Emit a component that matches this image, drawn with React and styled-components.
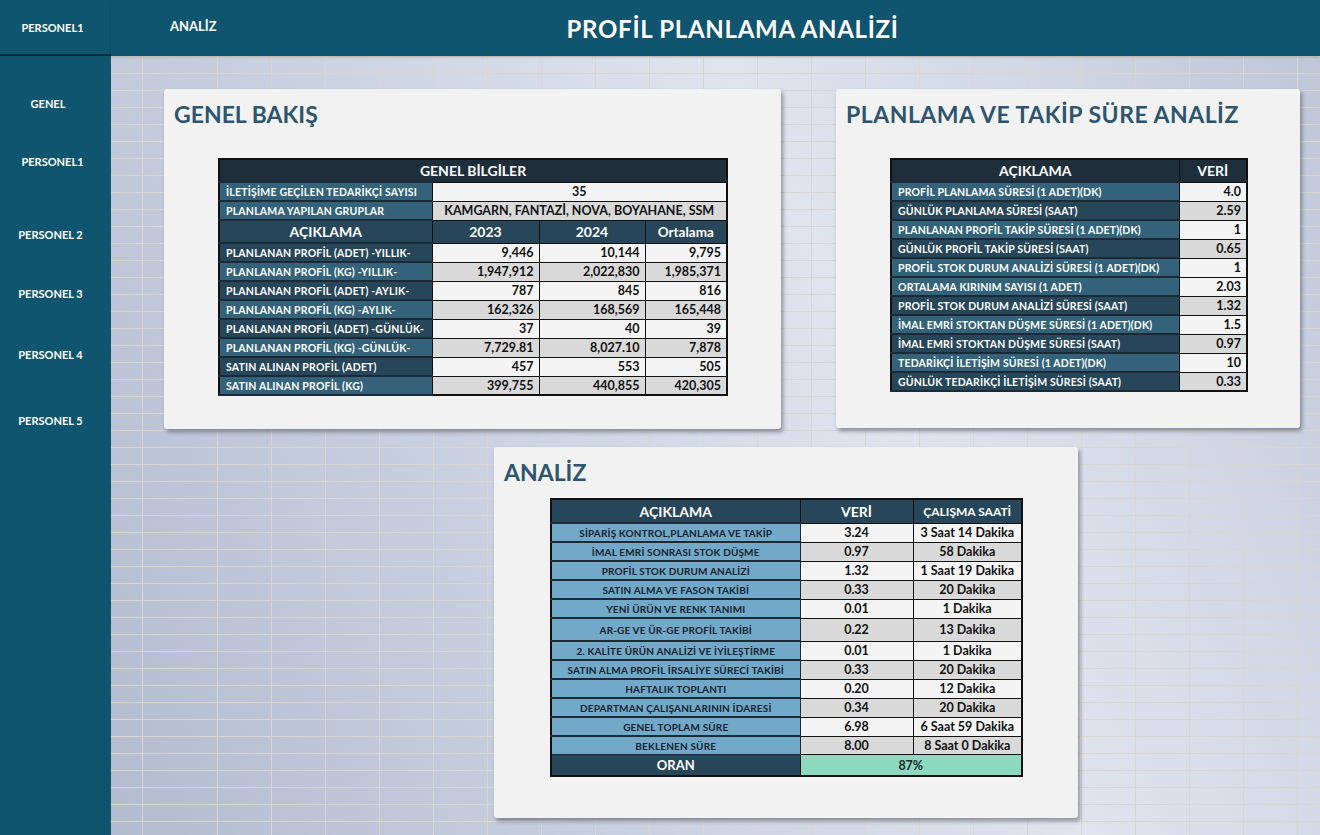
import React from 'react';
import styled, { createGlobalStyle } from 'styled-components';

const GlobalStyle = createGlobalStyle`
  html, body {
    margin: 0;
    padding: 0;
  }
  body {
    font-family: Lato, "Open Sans", "Noto Sans", sans-serif;
    background: #0f5570;
  }
`;

const Page = styled.div`
  display: grid;
  grid-template-columns: 111px 1fr;
  grid-template-rows: 56px 1fr;
  width: 1320px;
  height: 835px;
  overflow: hidden;
`;

const Brand = styled.div`
  background: #0f5570;
  border-bottom: 2px solid #0a2b3a;
  box-sizing: border-box;
  display: flex;
  align-items: center;
  justify-content: center;
  padding: 0 6px 0 0;
  color: #fff;
  font-weight: 700;
  font-size: 11px;
`;

const TopBar = styled.header`
  background: #0f5570;
  display: flex;
  align-items: center;
  padding-left: 59px;
  color: #fff;
  box-shadow: 0 1px 2px rgba(0, 0, 0, 0.2);
  z-index: 1;
`;

const TopLink = styled.span`
  font-weight: 700;
  font-size: 13px;
  margin-top: -5px;
`;

const Title = styled.h1`
  margin: 0 0 0 350px;
  font-size: 24px;
  font-weight: 700;
  letter-spacing: 0.7px;
`;

const Sidebar = styled.nav`
  background: #0f5570;
  display: flex;
  flex-direction: column;
  align-items: center;
  padding-right: 10px;
`;

const SideItem = styled.div`
  margin-top: ${p => p.$top}px;
  margin-left: ${p => p.$shift || 0}px;
  line-height: 14px;
  color: #fff;
  font-weight: 700;
  font-size: 11px;
  white-space: nowrap;
`;

const Canvas = styled.main`
  position: relative;
  padding: 33px 20px 0 53px;
  background-color: #cdd4e3;
  background-image:
    repeating-linear-gradient(to right, transparent 0 53px, #dad6cf 53px 54px),
    repeating-linear-gradient(to bottom, #dad6cf 0 1px, transparent 1px 17px),
    linear-gradient(65deg, #b3bbcf 0%, #c7cedf 30%, #dfe4ee 62%, #d2d8e6 80%, #bfc6d8 100%);
  background-position: 53px 0, 0 0, 0 0;
`;

const TopRow = styled.div`
  display: flex;
  gap: 55px;
`;

const Card = styled.section`
  width: ${p => p.$w}px;
  height: ${p => p.$h}px;
  margin-left: ${p => p.$left || 0}px;
  margin-top: ${p => p.$top || 0}px;
  background: #f2f2f2;
  border-radius: 3px;
  box-shadow: 2px 3px 4px rgba(40, 45, 60, 0.45);
  box-sizing: border-box;
  padding: 10px 0 0 10px;
`;

const CardTitle = styled.h2`
  margin: 0;
  font-size: 23px;
  font-weight: 700;
  color: #2e5570;
  line-height: 30px;
  letter-spacing: ${p => p.$spacing || 0}px;
`;

const TableWrap = styled.div`
  margin-top: ${p => p.$top}px;
  margin-left: ${p => p.$left}px;
`;

const Table = styled.table`
  border-collapse: collapse;
  table-layout: fixed;
  width: ${p => p.$w}px;
  border: 2px solid #111;
  font-weight: 700;
`;

const Head = styled.th`
  height: ${p => p.$h || 21}px;
  padding: 0 4px;
  background: ${p => p.$bg || '#27465a'};
  color: #fff;
  font-size: ${p => p.$size || 14}px;
  text-align: center;
  border: 1px solid #111;
  white-space: nowrap;
`;

const Label = styled.td`
  height: ${p => p.$h || 17}px;
  padding: 0 0 0 6px;
  background: ${p => (p.$dark ? '#27465a' : '#33627a')};
  color: #fff;
  font-size: ${p => p.$size || 10.5}px;
  letter-spacing: ${p => p.$spacing ?? 0.2}px;
  text-align: left;
  white-space: nowrap;
  overflow: hidden;
  border-top: 2px solid #1b2a34;
  border-bottom: 2px solid #1b2a34;
  border-left: 1px solid #111;
  border-right: 1px solid #111;
`;

const SoftLabel = styled.td`
  height: ${p => p.$h || 17}px;
  padding: 0 2px;
  background: #72a8c8;
  color: #15232d;
  font-size: 10px;
  letter-spacing: 0.15px;
  text-align: center;
  white-space: nowrap;
  overflow: hidden;
  border: 1px solid #1b2a34;
  border-top-width: 2px;
`;

const Value = styled.td`
  height: ${p => p.$h || 17}px;
  padding: 0 ${p => (p.$center ? 2 : 5)}px 0 2px;
  background: ${p => (p.$gray ? '#d9d9d9' : '#f4f4f4')};
  color: #111;
  font-size: 12.5px;
  text-align: ${p => (p.$center ? 'center' : 'right')};
  white-space: nowrap;
  border: 1px solid #111;
`;

const Ratio = styled.td`
  height: 18px;
  background: #8cd9c0;
  color: #1a2a30;
  font-size: 12.5px;
  text-align: center;
  border: 1px solid #111;
`;

const generalRows = [
  ['PLANLANAN PROFİL (ADET) -YILLIK-', '9,446', '10,144', '9,795'],
  ['PLANLANAN PROFİL (KG) -YILLIK-', '1,947,912', '2,022,830', '1,985,371'],
  ['PLANLANAN PROFİL (ADET) -AYLIK-', '787', '845', '816'],
  ['PLANLANAN PROFİL (KG) -AYLIK-', '162,326', '168,569', '165,448'],
  ['PLANLANAN PROFİL (ADET) -GÜNLÜK-', '37', '40', '39'],
  ['PLANLANAN PROFİL (KG) -GÜNLÜK-', '7,729.81', '8,027.10', '7,878'],
  ['SATIN ALINAN PROFİL (ADET)', '457', '553', '505'],
  ['SATIN ALINAN PROFİL (KG)', '399,755', '440,855', '420,305']
];

const timeRows = [
  ['PROFİL PLANLAMA SÜRESİ (1 ADET)(DK)', '4.0', false],
  ['GÜNLÜK PLANLAMA SÜRESİ (SAAT)', '2.59', true],
  ['PLANLANAN PROFİL TAKİP SÜRESİ (1 ADET)(DK)', '1', false],
  ['GÜNLÜK PROFİL TAKİP SÜRESİ (SAAT)', '0.65', true],
  ['PROFİL STOK DURUM ANALİZİ SÜRESİ (1 ADET)(DK)', '1', false],
  ['ORTALAMA KIRINIM SAYISI (1 ADET)', '2.03', false],
  ['PROFİL STOK DURUM ANALİZİ SÜRESİ (SAAT)', '1.32', true],
  ['İMAL EMRİ STOKTAN DÜŞME SÜRESİ (1 ADET)(DK)', '1.5', false],
  ['İMAL EMRİ STOKTAN DÜŞME SÜRESİ (SAAT)', '0.97', true],
  ['TEDARİKÇİ İLETİŞİM SÜRESİ (1 ADET)(DK)', '10', false],
  ['GÜNLÜK TEDARİKÇİ İLETİŞİM SÜRESİ (SAAT)', '0.33', true]
];

const analysisRows = [
  ['SİPARİŞ KONTROL,PLANLAMA VE TAKİP', '3.24', '3 Saat 14 Dakika'],
  ['İMAL EMRİ SONRASI STOK DÜŞME', '0.97', '58 Dakika'],
  ['PROFİL STOK DURUM ANALİZİ', '1.32', '1 Saat 19 Dakika'],
  ['SATIN ALMA VE FASON TAKİBİ', '0.33', '20 Dakika'],
  ['YENİ ÜRÜN VE RENK TANIMI', '0.01', '1 Dakika'],
  ['AR-GE VE ÜR-GE PROFİL TAKİBİ', '0.22', '13 Dakika', 21],
  ['2. KALİTE ÜRÜN ANALİZİ VE İYİLEŞTİRME', '0.01', '1 Dakika'],
  ['SATIN ALMA PROFİL İRSALİYE SÜRECİ TAKİBİ', '0.33', '20 Dakika'],
  ['HAFTALIK TOPLANTI', '0.20', '12 Dakika'],
  ['DEPARTMAN ÇALIŞANLARININ İDARESİ', '0.34', '20 Dakika'],
  ['GENEL TOPLAM SÜRE', '6.98', '6 Saat 59 Dakika'],
  ['BEKLENEN SÜRE', '8.00', '8 Saat 0 Dakika']
];

const sideItems = [
  ['GENEL', 41, -5],
  ['PERSONEL1', 44, 4],
  ['PERSONEL 2', 59, 0],
  ['PERSONEL 3', 45, 0],
  ['PERSONEL 4', 47, 0],
  ['PERSONEL 5', 52, 0]
];

const GeneralTable = () => (
  <Table $w={508}>
    <colgroup>
      <col style={{ width: 213 }} />
      <col style={{ width: 107 }} />
      <col style={{ width: 106 }} />
      <col style={{ width: 82 }} />
    </colgroup>
    <tbody>
      <tr>
        <Head colSpan={4} $bg="#1e2f3b" $size={14}>GENEL BİLGİLER</Head>
      </tr>
      <tr>
        <Label>İLETİŞİME GEÇİLEN TEDARİKÇİ SAYISI</Label>
        <Value colSpan={3} $center>35</Value>
      </tr>
      <tr>
        <Label>PLANLAMA YAPILAN GRUPLAR</Label>
        <Value colSpan={3} $center $gray>KAMGARN, FANTAZİ, NOVA, BOYAHANE, SSM</Value>
      </tr>
      <tr>
        <Head>AÇIKLAMA</Head>
        <Head>2023</Head>
        <Head>2024</Head>
        <Head $size={13.5}>Ortalama</Head>
      </tr>
      {generalRows.map(([label, a, b, c], i) => (
        <tr key={label}>
          <Label $dark={i % 2 === 0}>{label}</Label>
          <Value $gray={i % 2 === 1}>{a}</Value>
          <Value $gray={i % 2 === 1}>{b}</Value>
          <Value $gray={i % 2 === 1}>{c}</Value>
        </tr>
      ))}
    </tbody>
  </Table>
);

const TimeTable = () => (
  <Table $w={356}>
    <colgroup>
      <col style={{ width: 288 }} />
      <col style={{ width: 68 }} />
    </colgroup>
    <tbody>
      <tr>
        <Head $bg="#1e2f3b">AÇIKLAMA</Head>
        <Head $bg="#1e2f3b">VERİ</Head>
      </tr>
      {timeRows.map(([label, v, dark]) => (
        <tr key={label}>
          <Label $dark={dark} $size={10.5} $spacing={0.15}>{label}</Label>
          <Value $gray={dark}>{v}</Value>
        </tr>
      ))}
    </tbody>
  </Table>
);

const AnalysisTable = () => (
  <Table $w={471}>
    <colgroup>
      <col style={{ width: 249 }} />
      <col style={{ width: 113 }} />
      <col style={{ width: 109 }} />
    </colgroup>
    <tbody>
      <tr>
        <Head $h={22}>AÇIKLAMA</Head>
        <Head $h={22}>VERİ</Head>
        <Head $h={22} $size={12}>ÇALIŞMA SAATİ</Head>
      </tr>
      {analysisRows.map(([label, v, t, h], i) => (
        <tr key={label}>
          <SoftLabel $h={h}>{label}</SoftLabel>
          <Value $h={h} $center $gray={i % 2 === 1}>{v}</Value>
          <Value $h={h} $center $gray={i % 2 === 1}>{t}</Value>
        </tr>
      ))}
      <tr>
        <Head $h={18} $size={13}>ORAN</Head>
        <Ratio colSpan={2}>87%</Ratio>
      </tr>
    </tbody>
  </Table>
);

export default function App() {
  return (
    <>
      <GlobalStyle />
      <Page>
        <Brand>PERSONEL1</Brand>
        <TopBar>
          <TopLink>ANALİZ</TopLink>
          <Title>PROFİL PLANLAMA ANALİZİ</Title>
        </TopBar>
        <Sidebar>
          {sideItems.map(([name, top, shift]) => (
            <SideItem key={name} $top={top} $shift={shift}>
              {name}
            </SideItem>
          ))}
        </Sidebar>
        <Canvas>
          <TopRow>
            <Card $w={617} $h={340}>
              <CardTitle>GENEL BAKIŞ</CardTitle>
              <TableWrap $top={29} $left={44}>
                <GeneralTable />
              </TableWrap>
            </Card>
            <Card $w={464} $h={339}>
              <CardTitle $spacing={0.5}>PLANLAMA VE TAKİP SÜRE ANALİZ</CardTitle>
              <TableWrap $top={29} $left={44}>
                <TimeTable />
              </TableWrap>
            </Card>
          </TopRow>
          <Card $w={584} $h={371} $left={330} $top={18}>
            <CardTitle>ANALİZ</CardTitle>
            <TableWrap $top={11} $left={46}>
              <AnalysisTable />
            </TableWrap>
          </Card>
        </Canvas>
      </Page>
    </>
  );
}
